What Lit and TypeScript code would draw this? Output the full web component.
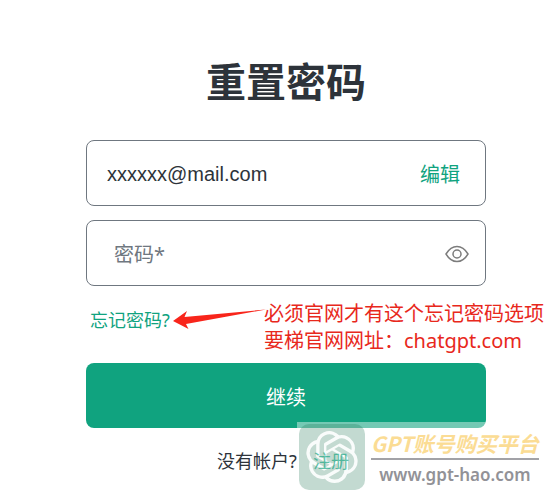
import { LitElement, html, css, svg } from "lit";
import { customElement, state } from "lit/decorators.js";

const knot = svg`<path d="M22.2819 9.8211a5.9847 5.9847 0 0 0-.5157-4.9108 6.0462 6.0462 0 0 0-6.5098-2.9A6.0651 6.0651 0 0 0 4.9807 4.1818a5.9847 5.9847 0 0 0-3.9977 2.9 6.0462 6.0462 0 0 0 .7427 7.0966 5.98 5.98 0 0 0 .511 4.9107 6.051 6.051 0 0 0 6.5146 2.9001A5.9847 5.9847 0 0 0 13.2599 24a6.0557 6.0557 0 0 0 5.7718-4.2058 5.9894 5.9894 0 0 0 3.9977-2.9001 6.0557 6.0557 0 0 0-.7475-7.0729zm-9.022 12.6081a4.4755 4.4755 0 0 1-2.8764-1.0408l.1419-.0804 4.7783-2.7582a.7948.7948 0 0 0 .3927-.6813v-6.7369l2.02 1.1686a.071.071 0 0 1 .038.052v5.5826a4.504 4.504 0 0 1-4.4945 4.4944zm-9.6607-4.1254a4.4708 4.4708 0 0 1-.5346-3.0137l.142.0852 4.783 2.7582a.7712.7712 0 0 0 .7806 0l5.8428-3.3685v2.3324a.0804.0804 0 0 1-.0332.0615L9.74 19.9502a4.4992 4.4992 0 0 1-6.1408-1.6464zM2.3408 7.8956a4.485 4.485 0 0 1 2.3655-1.9728V11.6a.7664.7664 0 0 0 .3879.6765l5.8144 3.3543-2.0201 1.1685a.0757.0757 0 0 1-.071 0l-4.8303-2.7865A4.504 4.504 0 0 1 2.3408 7.872zm16.5963 3.8558L13.1038 8.364 15.1192 7.2a.0757.0757 0 0 1 .071 0l4.8303 2.7913a4.4944 4.4944 0 0 1-.6765 8.1042v-5.6772a.79.79 0 0 0-.407-.667zm2.0107-3.0231l-.142-.0852-4.7735-2.7818a.7759.7759 0 0 0-.7854 0L9.409 9.2297V6.8974a.0662.0662 0 0 1 .0284-.0615l4.8303-2.7866a4.4992 4.4992 0 0 1 6.6802 4.66zM8.3065 12.863l-2.02-1.1638a.0804.0804 0 0 1-.038-.0567V6.0742a4.4992 4.4992 0 0 1 7.3757-3.4537l-.142.0805L8.704 5.459a.7948.7948 0 0 0-.3927.6813zm1.0976-2.3654l2.602-1.4998 2.6069 1.4998v2.9994l-2.5974 1.4997-2.6067-1.4997Z"/>`;

@customElement("app-root")
export class AppRoot extends LitElement {
  @state() private visible = false;

  static styles = css`
    :host {
      display: block;
      box-sizing: border-box;
      padding: 56px 16px 16px 36px;
      background: #fff;
      color: #2d333a;
      font-family: "Noto Sans", "Noto Sans CJK SC", sans-serif;
      font-size: 20px;
      line-height: 27px;
    }
    * { box-sizing: border-box; }
    a { color: #10a37f; text-decoration: none; }
    main { max-width: 400px; margin: 0 auto; }
    h1 {
      margin: 0 0 32px;
      font-size: 40px;
      line-height: 52px;
      font-weight: 700;
      text-align: center;
    }
    .field {
      display: flex;
      align-items: center;
      height: 66px;
      margin-bottom: 14px;
      padding: 2px 16px 0 20px;
      border: 1px solid #6f7780;
      border-radius: 8px;
    }
    .field.email { padding-right: 25px; }
    .field.password { padding-left: 27px; }
    .field input {
      flex: 1;
      min-width: 0;
      padding: 0;
      border: 0;
      outline: 0;
      background: none;
      color: #2d333a;
      font: inherit;
    }
    .email input { font-family: "Liberation Sans", sans-serif; }
    .field input::placeholder { color: #6f7780; opacity: 1; }
    .eye {
      display: flex;
      padding: 0;
      border: 0;
      background: none;
      color: #7c7c7c;
    }
    .help { position: relative; padding: 6px 4px; height: 63px; }
    .small { font-size: 18px; }
    .note {
      position: absolute;
      left: 178px;
      top: 0;
      margin: 0;
      color: #e8281c;
      white-space: nowrap;
    }
    .arrow { position: absolute; left: 86px; top: 8px; }
    .submit {
      display: block;
      width: 100%;
      height: 65px;
      padding: 4px 0 0;
      border: 0;
      border-radius: 8px;
      background: #10a37f;
      color: #fff;
      font: inherit;
    }
    .end { position: relative; }
    .signup {
      display: flex;
      justify-content: center;
      gap: 16px;
      margin: 0;
      padding: 20px 6px 0 0;
    }
    .signup a {
      position: relative;
      z-index: 1;
      opacity: 0.65;
    }
    .mark {
      position: absolute;
      left: 211px;
      top: -6px;
      display: flex;
      gap: 6px;
      padding: 2px;
      background: rgba(255, 255, 255, 0.42);
      pointer-events: none;
    }
    .badge {
      display: flex;
      align-items: center;
      justify-content: center;
      width: 66px;
      height: 66px;
      border-radius: 10px;
      background: rgba(24, 113, 78, 0.26);
      fill: rgba(255, 255, 255, 0.9);
    }
    .words { padding-top: 6px; white-space: nowrap; text-align: center; }
    .brand {
      padding-bottom: 2px;
      border-bottom: 2px solid #a2a2a7;
      color: #fbdc94;
      font-family: "Noto Sans CJK SC", sans-serif;
      font-size: 21px;
      line-height: 26px;
      font-weight: 700;
      font-style: italic;
    }
    .site {
      color: #929297;
      font-family: "Noto Sans", sans-serif;
      font-size: 17px;
      line-height: 30px;
      font-weight: 600;
    }
  `;

  render() {
    return html`
      <main>
        <h1>重置密码</h1>
        <form @submit=${(e: Event) => e.preventDefault()}>
          <div class="field email">
            <input type="email" aria-label="电子邮件" value="xxxxxx@mail.com" readonly />
            <a href="#edit">编辑</a>
          </div>
          <div class="field password">
            <input type=${this.visible ? "text" : "password"} aria-label="密码" placeholder="密码*" />
            <button class="eye" type="button" aria-label="显示密码" @click=${() => (this.visible = !this.visible)}>
              <svg width="24" height="20" viewBox="0 0 24 20" fill="none" stroke="currentColor" stroke-width="1.5">
                <path d="M1 10C4 5 7.500 2.500 12 2.500S20 5 23 10C20 15 16.500 17.500 12 17.500S4 15 1 10Z" />
                <circle cx="12" cy="10" r="4" />
              </svg>
            </button>
          </div>
          <div class="help">
            <a class="small" href="#forgot">忘记密码?</a>
            <svg class="arrow" width="96" height="24" viewBox="0 0 96 24" fill="#f8251b">
              <path d="M1 13 15 3 12.500 9 94 1.500 14 16 16.500 21Z" />
            </svg>
            <p class="note">必须官网才有这个忘记密码选项<br />要梯官网网址：chatgpt.com</p>
          </div>
          <button class="submit" type="submit">继续</button>
        </form>
        <div class="end">
          <p class="signup small"><span>没有帐户?</span><a href="#signup">注册</a></p>
          <div class="mark">
            <div class="badge"><svg width="52" height="52" viewBox="0 0 24 24" aria-hidden="true">${knot}</svg></div>
            <div class="words">
              <div class="brand">GPT账号购买平台</div>
              <div class="site">www.gpt-hao.com</div>
            </div>
          </div>
        </div>
      </main>
    `;
  }
}
